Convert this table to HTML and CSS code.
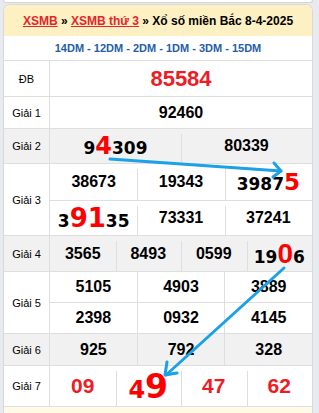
FILE: index.html
```html
<!DOCTYPE html>
<html>
<head>
<meta charset="utf-8">
<link rel="stylesheet" href="styles.css">
</head>
<body>
<div class="prev"></div>
<div class="card">
  <div class="head"><a class="lnk">XSMB</a>&nbsp;»&nbsp;<a class="lnk">XSMB thứ 3</a>&nbsp;»&nbsp;Xổ số miền Bắc 8-4-2025</div>
  <div class="dm">14DM - 12DM - 2DM - 1DM - 3DM - 15DM</div>

  <div class="row">
    <div class="lbl">ĐB</div>
    <div class="cells"><div class="nums h35"><div class="n db">85584</div></div></div>
  </div>

  <div class="row">
    <div class="lbl">Giải 1</div>
    <div class="cells"><div class="nums h31"><div class="n">92460</div></div></div>
  </div>

  <div class="row gray gap">
    <div class="lbl">Giải 2</div>
    <div class="cells"><div class="nums h34">
      <div class="n"><span class="hl">9<span class="r s24">4</span>309</span></div>
      <div class="n">80339</div>
    </div></div>
  </div>

  <div class="row gap">
    <div class="lbl">Giải 3</div>
    <div class="cells">
      <div class="nums h36">
        <div class="n">38673</div>
        <div class="n">19343</div>
        <div class="n"><span class="hl">3987<span class="r s22">5</span></span></div>
      </div>
      <div class="nums h35">
        <div class="n"><span class="hl">3<span class="r s26">91</span>35</span></div>
        <div class="n">73331</div>
        <div class="n">37241</div>
      </div>
    </div>
  </div>

  <div class="row gray gap">
    <div class="lbl">Giải 4</div>
    <div class="cells"><div class="nums h35">
      <div class="n">3565</div>
      <div class="n">8493</div>
      <div class="n">0599</div>
      <div class="n"><span class="hl">19<span class="r ra">0</span>6</span></div>
    </div></div>
  </div>

  <div class="row">
    <div class="lbl">Giải 5</div>
    <div class="cells">
      <div class="nums h30">
        <div class="n">5105</div>
        <div class="n">4903</div>
        <div class="n">3889</div>
      </div>
      <div class="nums h31">
        <div class="n">2398</div>
        <div class="n">0932</div>
        <div class="n">4145</div>
      </div>
    </div>
  </div>

  <div class="row gray">
    <div class="lbl">Giải 6</div>
    <div class="cells"><div class="nums h31">
      <div class="n">925</div>
      <div class="n">792</div>
      <div class="n">328</div>
    </div></div>
  </div>

  <div class="row gap">
    <div class="lbl">Giải 7</div>
    <div class="cells"><div class="nums h40">
      <div class="n g7">09</div>
      <div class="n"><span class="hl"><span class="r s24">4</span><span class="r s34">9</span></span></div>
      <div class="n g7">47</div>
      <div class="n g7">62</div>
    </div></div>
  </div>

  <div class="foot"></div>
</div>

<svg class="arrows" width="319" height="413" viewBox="0 0 319 413">
  <g fill="none" stroke="#1ba1e6" stroke-width="3" stroke-linecap="round" stroke-linejoin="round">
    <path d="M110 159 L281 171"/>
    <path d="M274 163 L281 171 L273 177"/>
    <path d="M284 268 L166 375"/>
    <path d="M167 362 L165 375 L177 373"/>
  </g>
</svg>
</body>
</html>
```

FILE: styles.css
```css
* { box-sizing: border-box; }

body {
  margin: 0;
  width: 319px;
  height: 413px;
  overflow: hidden;
  position: relative;
  background: #e7eaee;
  font-family: "Liberation Sans", Arial, sans-serif;
  color: #000;
}

.prev {
  height: 3px;
  margin: 0 6px 0 3px;
  background: #fff;
  border: 1px solid #d5d5d5;
  border-top: 0;
  border-radius: 0 0 5px 5px;
}

.card {
  margin: 1px 6px 0 3px;
  background: #fff;
  border: 1px solid #d9d9d9;
  border-bottom: 0;
  border-radius: 7px 7px 0 0;
  overflow: hidden;
}

.head {
  height: 31px;
  background: #fdf0c2;
  display: flex;
  align-items: center;
  justify-content: center;
  font-size: 12px;
  font-weight: bold;
  white-space: nowrap;
}

.lnk {
  color: #e4252b;
  text-decoration: underline;
}

.dm {
  height: 24px;
  display: flex;
  align-items: center;
  justify-content: center;
  font-size: 11px;
  font-weight: bold;
  color: #1f5ea8;
}

.row {
  display: grid;
  grid-template-columns: 46px 1fr;
  border-top: 1px solid #dedede;
}

.gray { background: #f1f1f1; }

.lbl {
  border-right: 1px solid #dedede;
  display: flex;
  align-items: center;
  justify-content: center;
  font-size: 11px;
}

.nums { display: flex; }
.nums + .nums { border-top: 1px solid #dedede; }

.h30 { height: 30px; }
.h31 { height: 31px; }
.h34 { height: 34px; }
.h35 { height: 35px; }
.h36 { height: 36px; }
.h40 { height: 40px; }

.n {
  flex: 1;
  display: flex;
  align-items: center;
  justify-content: center;
  font-size: 16px;
  font-weight: bold;
  white-space: nowrap;
}

.n + .n { border-left: 1px solid #dedede; }

.gap .n + .n {
  border-left: 0;
  background: linear-gradient(#dedede, #dedede) left 0 top 5px / 1px 100% no-repeat;
}

.db {
  font-size: 22px;
  color: #ee1d25;
}

.g7 {
  font-size: 21px;
  color: #ee1d25;
}

.hl {
  font-family: "DejaVu Sans", sans-serif;
  font-size: 17px;
  font-weight: bold;
}

.r { color: #ff0000; }
.s22 { font-size: 23px; }
.s24 { font-size: 24px; }
.s26 { font-size: 26px; }
.s34 { font-size: 33px; }

.ra {
  font-family: "Liberation Sans", Arial, sans-serif;
  font-size: 28px;
}

.foot {
  height: 10px;
  background: #fefae6;
  border-top: 1px solid #dedede;
}

.arrows {
  position: absolute;
  left: 0;
  top: 0;
  pointer-events: none;
}
```
